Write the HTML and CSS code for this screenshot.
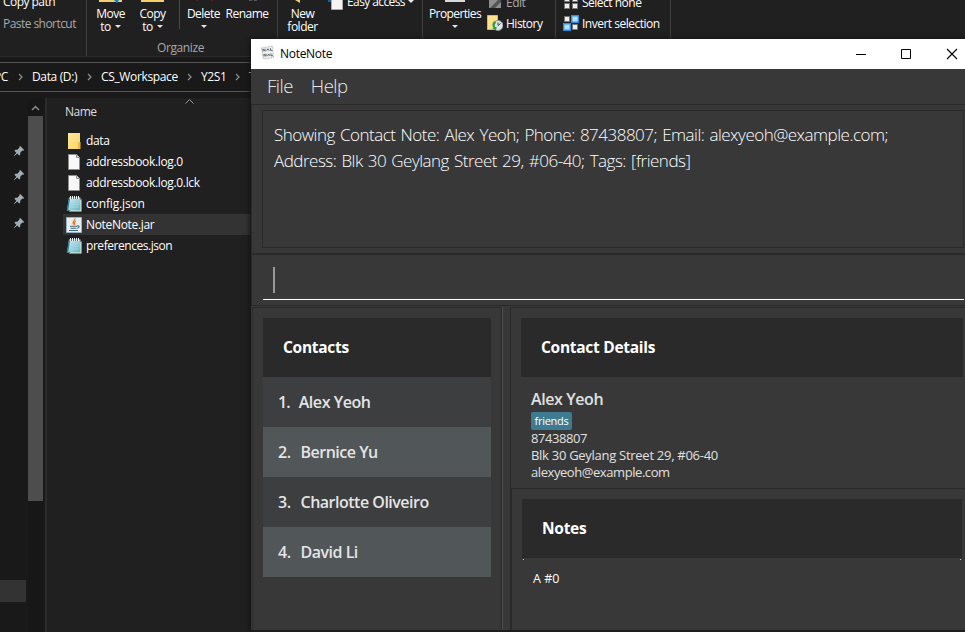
FILE: index.html
```
<!DOCTYPE html>
<html lang="en">
<head>
<meta charset="utf-8">
<title>NoteNote</title>
<link rel="stylesheet" href="styles.css">
</head>
<body>
<svg width="0" height="0" class="defs">
  <defs>
    <linearGradient id="pad" x1="0" y1="0" x2="1" y2="1"><stop offset="0" stop-color="#d8f3f9"/><stop offset="1" stop-color="#5fb3c6"/></linearGradient>
    <linearGradient id="fold" x1="0" y1="0" x2="1" y2="1"><stop offset="0" stop-color="#ffe89a"/><stop offset="1" stop-color="#fbd667"/></linearGradient>
    <symbol id="i-file" viewBox="0 0 16 16"><path d="M2.5.5h8l3 3v12h-11z" fill="#f8f8f8" stroke="#8d8d8d"/><path d="M10.5.5v3h3" fill="#ddd" stroke="#8d8d8d"/></symbol>
    <symbol id="i-note" viewBox="0 0 16 16"><path d="M3 15.500h12.5V3z" fill="#f3edc8"/><path d="M3 1.5h11.5v13H1z" fill="url(#pad)"/><path d="M3 1.5L.6 14.5h1.6L4 3z" fill="#287f98"/><path d="M5 6h8M4.7 8.5h8M4.4 11h8.200" stroke="#a5d8e3" stroke-width=".8"/><path d="M4.500 0v3M6.500 0v3M8.500 0v3M10.500 0v3M12.500 0v3" stroke="#eef6f8"/><path d="M5.500 1v2M7.500 1v2M9.500 1v2M11.500 1v2" stroke="#5b7078"/></symbol>
    <symbol id="i-pin" viewBox="0 0 12 12"><path d="M7 .8l4.200 4.200-1 .7-.8-.1-2.200 2.200.1 1.800-1 1L4.300 8.600 1 11.300l-.3-.3 2.700-3.300L1.400 5.700l1-1 1.900.1 2.200-2.200-.1-.8z" fill="#a3adb7"/></symbol>
    <symbol id="i-chev" viewBox="0 0 5 8"><path d="M1 1l3 3-3 3" fill="none" stroke="#8c8c8c" stroke-width="1.300"/></symbol>
    <symbol id="i-drop" viewBox="0 0 6 3"><path d="M0 0h6L3 3z" fill="#e6e6e6"/></symbol>
  </defs>
</svg>

<div class="explorer">
  <div class="ribbon">
    <div class="group clip">
      <span>Copy path</span>
      <span class="dim">Paste shortcut</span>
    </div>
    <div class="group organize">
      <div class="tools">
        <div class="tool move"><svg class="top" width="24" height="3"><path d="M0 0h23v2H0z" fill="#f3cf6a"/><path d="M15 0h5l-2 3z" fill="#1979ca"/></svg><span>Move</span><span>to <svg width="6" height="3"><use href="#i-drop"/></svg></span></div>
        <div class="tool copy"><svg class="top" width="24" height="3"><path d="M0 0h23v2H0z" fill="#f3cf6a"/></svg><span>Copy</span><span>to <svg width="6" height="3"><use href="#i-drop"/></svg></span></div>
        <div class="tool delete"><svg class="top" width="24" height="3"><path d="M4 0h2v1H4zM19 0h2v1h-2z" fill="#5d1d22"/></svg><span>Delete</span><span><svg width="6" height="3"><use href="#i-drop"/></svg></span></div>
        <div class="tool rename"><svg class="top" width="24" height="3"><path d="M14 0h3v1h-3zM19 0h3v1h-3z" fill="#555"/></svg><span>Rename</span></div>
      </div>
      <div class="label dim">Organize</div>
    </div>
    <div class="group new">
      <div class="tool folder"><svg class="top" width="24" height="3"><path d="M4 0h5v3z" fill="#f3cf6a"/></svg><span>New</span><span>folder</span></div>
      <div class="easy"><svg width="16" height="10"><path d="M0 1h4" stroke="#1979ca" stroke-width="1.500"/><path d="M3.500-1v10.500h11V-1z" fill="#f5f5f5" stroke="#aaa"/></svg><span>Easy access</span><svg class="dd" width="6" height="3"><use href="#i-drop"/></svg></div>
    </div>
    <div class="group open">
      <div class="tool props"><svg class="top" width="24" height="3"><path d="M2 0h20v2H2z" fill="#d9d9d9"/></svg><span>Properties</span><span><svg width="6" height="3"><use href="#i-drop"/></svg></span></div>
      <div class="stack">
        <div class="item dim"><svg width="16" height="16"><path d="M2 0h12v14H2z" fill="#8e8e8e"/><path d="M3 14L14 3v5L8 14z" fill="#555"/></svg><span>Edit</span></div>
        <div class="item"><svg width="16" height="16"><path d="M.5.5h10v14H.5z" fill="#ffe18a" stroke="#dfb94f"/><circle cx="11" cy="10.500" r="5" fill="#dfe5e8" stroke="#89949a"/><path d="M11 7.500v3l2.500-2" fill="none" stroke="#444"/><path d="M8 6c-3 1-3 5-1 7l-2 .6 4 1.400.8-3.500-1.500.8c-1-1.500-.8-3.300.7-4.300z" fill="#24a23c"/></svg><span>History</span></div>
      </div>
    </div>
    <div class="group select">
      <div class="stack">
        <div class="item"><svg width="16" height="16"><path d="M1.500 2.500h5v5h-5zM9.500 2.500h5v5h-5zM1.500 9.500h5v5h-5zM9.500 9.500h5v5h-5z" fill="#eee" stroke="#777"/></svg><span>Select none</span></div>
        <div class="item"><svg width="16" height="16"><path d="M1.500 1.500h5v5h-5zM9.500 9.500h5v5h-5z" fill="#eee" stroke="#777"/><path d="M8.700.7h6.600v6.600H8.700zM.7 8.700h6.600v6.600H.7z" fill="#b9e0fa" stroke="#2c8fe0" stroke-width="1.400"/></svg><span>Invert selection</span></div>
      </div>
    </div>
  </div>

  <div class="address">
    <span class="c-pc">PC</span><svg width="5" height="8"><use href="#i-chev"/></svg>
    <span class="c-data">Data (D:)</span><svg width="5" height="8"><use href="#i-chev"/></svg>
    <span class="c-cs">CS_Workspace</span><svg width="5" height="8"><use href="#i-chev"/></svg>
    <span class="c-y">Y2S1</span><svg width="5" height="8"><use href="#i-chev"/></svg>
    <span class="c-t">T</span>
  </div>

  <div class="content">
    <div class="nav">
      <div class="pins">
        <svg width="12" height="12"><use href="#i-pin"/></svg>
        <svg width="12" height="12"><use href="#i-pin"/></svg>
        <svg width="12" height="12"><use href="#i-pin"/></svg>
        <svg width="12" height="12"><use href="#i-pin"/></svg>
      </div>
      <div class="nav-selected"></div>
    </div>
    <div class="scroll"><svg width="15" height="17"><path d="M4 12l3.500-3.500L11 12" fill="none" stroke="#8a8a8a" stroke-width="1.500"/></svg><div class="thumb"></div></div>
    <div class="files">
      <div class="head"><span>Name</span><svg width="9" height="5"><path d="M.5 4.500l4-4 4 4" fill="none" stroke="#9a9a9a"/></svg></div>
      <div class="row"><svg width="16" height="16"><path d="M2 0h12v16H2z" fill="url(#fold)"/><path d="M12 9h2.500v7H12z" fill="#e9bd45"/></svg><span>data</span></div>
      <div class="row"><svg width="16" height="16"><use href="#i-file"/></svg><span>addressbook.log.0</span></div>
      <div class="row"><svg width="16" height="16"><use href="#i-file"/></svg><span>addressbook.log.0.lck</span></div>
      <div class="row"><svg width="16" height="16"><use href="#i-note"/></svg><span class="wide">config.json</span></div>
      <div class="row active"><svg width="16" height="16"><path d="M.5.500h15v15H.5z" fill="#e8eef2" stroke="#9db0be"/><path d="M8.800 1.500c1 2-3.500 2.800-1 6M10 4c-2.500 1.200-1.500 2-1.300 4" fill="none" stroke="#ee7a1b" stroke-width="1.300"/><path d="M4 9.300h7M4.500 11.200h6M3 13.500h9M11 9c3-.8 2.500 1.800.3 2.300" fill="none" stroke="#3e6784" stroke-width="1.100"/></svg><span>NoteNote.jar</span></div>
      <div class="row"><svg width="16" height="16"><use href="#i-note"/></svg><span class="tight">preferences.json</span></div>
    </div>
  </div>
</div>

<div class="window">
  <div class="titlebar">
    <svg class="logo" width="15" height="15"><path d="M1.500 3l11-2 1 11.500-10 1.500z" fill="#eceeef" stroke="#b9bdbf" stroke-dasharray="2 1"/><path d="M3 6.500V4L5 6.200V3.700M6.500 5.800l1.500-2 1 1.800M10.500 3.200v2.200h2M4 11.500V9L6 11.300V8.800M7.500 11l1.200-2 1.200 1.800M11 8.500v2.200h2" fill="none" stroke="#51575b" stroke-width=".9"/></svg>
    <span>NoteNote</span>
    <svg class="controls" width="102" height="12"><path d="M0 6.500h10" stroke="#000"/><path d="M45.500 1.500h9v9h-9z" fill="none" stroke="#000"/><path d="M91 1l10 10M101 1L91 11" stroke="#000" stroke-width="1.100"/></svg>
  </div>
  <div class="menubar"><span>File</span><span>Help</span></div>
  <div class="result"><div class="result-box"><div>Showing Contact Note: Alex Yeoh; Phone: 87438807; Email: alexyeoh@example.com;</div><div>Address: Blk 30 Geylang Street 29, #06-40; Tags: [friends]</div></div></div>
  <div class="command"><div class="input"><div class="caret"></div></div></div>
  <div class="split">
    <div class="contacts">
      <div class="heading">Contacts</div>
      <div class="card one">1.<span class="first">Alex Yeoh</span></div>
      <div class="card even">2.<span>Bernice Yu</span></div>
      <div class="card">3.<span>Charlotte Oliveiro</span></div>
      <div class="card even">4.<span>David Li</span></div>
    </div>
    <div class="divider"></div>
    <div class="right">
      <div class="details">
        <div class="heading">Contact Details</div>
        <div class="person">
          <div class="name">Alex Yeoh</div>
          <div class="tag">friends</div>
          <div>87438807</div>
          <div class="addr">Blk 30 Geylang Street 29, #06-40</div>
          <div>alexyeoh@example.com</div>
        </div>
      </div>
      <div class="notes">
        <div class="heading">Notes</div>
        <div class="corners"><i></i><i></i></div>
        <div class="note">A #0</div>
      </div>
    </div>
  </div>
</div>
</body>
</html>
```
FILE: styles.css
```
* { box-sizing: border-box; }
body { margin: 0; width: 965px; height: 632px; overflow: hidden; background: #191919; font-family: "Open Sans", sans-serif; }
svg { display: block; flex: none; }
.defs { position: absolute; }
span { white-space: nowrap; }

.explorer { height: 632px; display: flex; flex-direction: column; color: #fff; font-size: 12px; letter-spacing: -.5px; }
.ribbon { height: 57px; flex: none; display: flex; background: #202020; border-bottom: 1px solid #2b2b2b; overflow: hidden; }
.dim { color: #a8a8a8; }
.group { border-right: 1px solid #3f3f3f; line-height: 13px; }
.clip { width: 87px; padding-left: 3px; display: flex; flex-direction: column; gap: 9px; margin-top: -5px; letter-spacing: -.55px; }
.organize { width: 191px; }
.tools { display: flex; height: 38px; }
.tool { display: flex; flex-direction: column; align-items: center; }
.tool .top { margin-bottom: 4px; }
.tool span { display: flex; align-items: center; gap: 4px; min-height: 13px; }
.move { width: 47px; }
.copy { width: 37px; }
.delete { width: 48px; margin-left: 8px; border-left: 1px solid #4a4a4a; height: 29px; overflow: visible; }
.rename { width: 40px; }
.label { text-align: center; padding: 3px 3px 0 0; letter-spacing: -.4px; }
.new { width: 145px; display: flex; }
.folder { width: 49px; }
.easy { display: flex; height: 10px; margin-left: 1px; letter-spacing: -.6px; }
.easy span { margin: -5px 0 0 3px; }
.easy .dd { margin: 0 0 0 3px; }
.open { width: 133px; display: flex; }
.props { width: 64px; letter-spacing: -.6px; }
.stack { display: flex; flex-direction: column; gap: 5px; margin-top: -6px; }
.item { display: flex; align-items: center; gap: 3px; height: 16px; }
.select { width: 115px; padding-left: 7px; }

.address { height: 30px; margin-top: 5px; flex: none; border: solid #535353; border-width: 1px 0; display: flex; align-items: center; letter-spacing: -.36px; background: #191919; padding-bottom: 1px; }
.c-pc { width: 18px; margin-left: -6px; margin-right: 6px; }
.c-data { width: 49px; margin: 0 6px 0 9px; }
.c-cs { width: 79px; margin: 0 7px 0 9px; }
.c-y { width: 27px; margin: 0 7px 0 9px; }
.c-t { margin-left: 9px; }

.content { flex: 1; display: flex; padding-top: 6px; }
.nav { width: 28px; display: flex; flex-direction: column; }
.pins { display: flex; flex-direction: column; gap: 12px; padding: 47px 0 0 13px; }
.nav-selected { width: 26px; height: 22px; margin-top: 351px; background: #333; }
.scroll { width: 15px; background: #171717; }
.thumb { height: 385px; background: #4d4d4d; margin-top: 1px; }
.files { flex: 1; margin-left: 2px; border-left: 2px solid #2b2b2b; background: #202020; letter-spacing: -.33px; }
.head { height: 32px; padding: 2px 0 0 18px; display: flex; color: #dedede; line-height: 24px; letter-spacing: -.5px; }
.head svg { margin: -1px 0 0 88px; }
.row { height: 21px; margin-left: 16px; padding-left: 3px; display: flex; align-items: center; gap: 4px; }
.row.active { background: #333; }
.row .wide { letter-spacing: -.15px; }
.row .tight { letter-spacing: -.45px; }

.window { position: absolute; left: 251px; top: 39px; width: 714px; height: 593px; display: flex; flex-direction: column; background: #383838; border-bottom: 2px solid #1d1d1d; box-shadow: -1px 0 5px #111; }
.titlebar { height: 30px; flex: none; background: #fff; color: #000; font-size: 12px; letter-spacing: -.3px; display: flex; align-items: center; padding: 0 7px 0 9px; }
.titlebar span { margin: -2px 0 0 5px; flex: 1; }
.logo { margin-top: -4px; }
.controls { margin-top: -1px; }
.menubar { height: 35px; flex: none; display: flex; gap: 18px; padding: 4px 0 0 16px; font-size: 18.5px; line-height: 26px; font-weight: 300; letter-spacing: -.5px; color: #e8e8e8; }
.result { height: 150px; flex: none; padding: 5px 1px 5px 10px; border: solid #2a2a2a; border-width: 1px 0 1px 1px; }
.result-box { height: 138px; border: 1px solid #2a2a2a; padding: 11px 0 0 11px; font-size: 17px; font-weight: 300; line-height: 26px; letter-spacing: -.5px; word-spacing: 1.200px; color: #fff; white-space: nowrap; }
.command { height: 52px; flex: none; border: solid #2a2a2a; border-width: 1px 0 1px 1px; padding: 0 1px 5px 11px; }
.input { height: 45px; border-bottom: 1px solid #fff; padding: 12px 0 0 10px; }
.caret { width: 2px; height: 26px; background: #999; }
.split { flex: 1; display: flex; padding: 1px 0 0 1px; min-height: 0; }
.contacts { width: 250px; border: 1px solid #2a2a2a; border-bottom: 0; padding: 10px 10px 0; }
.divider { width: 8px; border-left: 1px solid #4f4f4f; }
.heading { height: 59px; background: #2a2a2a; color: #fff; font-size: 15.500px; font-weight: 700; line-height: 59px; padding-left: 20px; letter-spacing: -.28px; }
.card { height: 50px; line-height: 50px; padding-left: 15px; background: #3c3e3f; color: #e4e4e4; font-size: 16px; font-weight: 600; letter-spacing: -.5px; }
.card.even { background: #515658; }
.card span { margin-left: 10px; }
.card.one { letter-spacing: -.9px; }
.card .first { margin-left: 9px; letter-spacing: -.45px; }
.right { flex: 1; display: flex; flex-direction: column; border-left: 1px solid #2a2a2a; }
.details { height: 181px; flex: none; border-top: 1px solid #2a2a2a; padding: 10px 2px 0 10px; }
.person { padding: 12px 0 0 10px; font-size: 13px; line-height: 17px; letter-spacing: -.43px; color: #e0e0e0; }
.name { font-size: 16px; font-weight: 600; line-height: 21px; letter-spacing: -.4px; }
.tag { width: 41px; height: 18px; margin: 2px 0 0; line-height: 18px; border-radius: 2px; background: #3e7b91; color: #fff; font-size: 11px; letter-spacing: -.25px; text-align: center; }
.addr { letter-spacing: -.28px; }
.notes { flex: 1; border: solid #2a2a2a; border-width: 1px 0 0 1px; padding: 10px 3px 0 10px; }
.corners { display: flex; justify-content: space-between; padding: 1px 1px 0; }
.corners i { width: 1px; height: 1px; background: #ccc; }
.note { padding-left: 11px; font-size: 12.500px; line-height: 17px; margin-top: 10px; color: #fff; }
```
